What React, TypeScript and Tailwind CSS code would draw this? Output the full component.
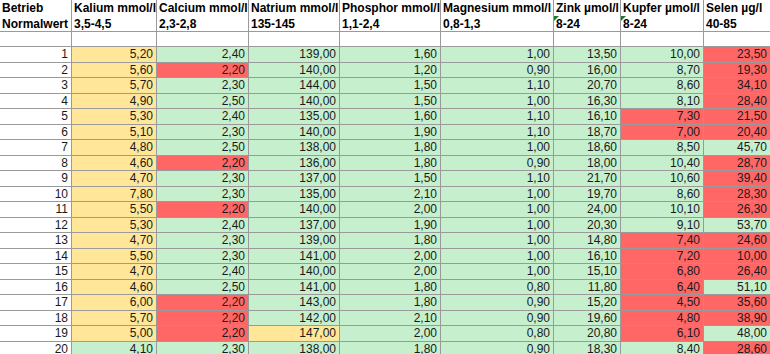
import React from 'react';

type Tone = 'y' | 'g' | 'r' | 'w';

const COLS = ['Betrieb', 'Kalium mmol/l', 'Calcium mmol/l', 'Natrium mmol/l', 'Phosphor mmol/l', 'Magnesium mmol/l', 'Zink µmol/l', 'Kupfer µmol/l', 'Selen µg/l'];
const NORMS = ['Normalwert', '3,5-4,5', '2,3-2,8', '135-145', '1,1-2,4', '0,8-1,3', '8-24', '8-24', '40-85'];

// value + tone per cell, one row per Betrieb
const ROWS: [string, Tone][][] = [
  [['5,20', 'y'], ['2,40', 'g'], ['139,00', 'g'], ['1,60', 'g'], ['1,00', 'g'], ['13,50', 'g'], ['10,00', 'g'], ['23,50', 'r']],
  [['5,60', 'y'], ['2,20', 'r'], ['140,00', 'g'], ['1,20', 'g'], ['0,90', 'g'], ['16,00', 'g'], ['8,70', 'g'], ['19,30', 'r']],
  [['5,70', 'y'], ['2,30', 'g'], ['144,00', 'g'], ['1,50', 'g'], ['1,10', 'g'], ['20,70', 'g'], ['8,60', 'g'], ['34,10', 'r']],
  [['4,90', 'y'], ['2,50', 'g'], ['140,00', 'g'], ['1,50', 'g'], ['1,00', 'g'], ['16,30', 'g'], ['8,10', 'g'], ['28,40', 'r']],
  [['5,30', 'y'], ['2,40', 'g'], ['135,00', 'g'], ['1,60', 'g'], ['1,10', 'g'], ['16,10', 'g'], ['7,30', 'r'], ['21,50', 'r']],
  [['5,10', 'y'], ['2,30', 'g'], ['140,00', 'g'], ['1,90', 'g'], ['1,10', 'g'], ['18,70', 'g'], ['7,00', 'r'], ['20,40', 'r']],
  [['4,80', 'y'], ['2,50', 'g'], ['138,00', 'g'], ['1,80', 'g'], ['1,00', 'g'], ['18,60', 'g'], ['8,50', 'g'], ['45,70', 'g']],
  [['4,60', 'y'], ['2,20', 'r'], ['136,00', 'g'], ['1,80', 'g'], ['0,90', 'g'], ['18,00', 'g'], ['10,40', 'g'], ['28,70', 'r']],
  [['4,70', 'y'], ['2,30', 'g'], ['137,00', 'g'], ['1,50', 'g'], ['1,10', 'g'], ['21,70', 'g'], ['10,60', 'g'], ['39,40', 'r']],
  [['7,80', 'y'], ['2,30', 'g'], ['135,00', 'g'], ['2,10', 'g'], ['1,00', 'g'], ['19,70', 'g'], ['8,60', 'g'], ['28,30', 'r']],
  [['5,50', 'y'], ['2,20', 'r'], ['140,00', 'g'], ['2,00', 'g'], ['1,00', 'g'], ['24,00', 'g'], ['10,10', 'g'], ['26,30', 'r']],
  [['5,30', 'y'], ['2,40', 'g'], ['137,00', 'g'], ['1,90', 'g'], ['1,00', 'g'], ['20,30', 'g'], ['9,10', 'g'], ['53,70', 'g']],
  [['4,70', 'y'], ['2,30', 'g'], ['139,00', 'g'], ['1,80', 'g'], ['1,00', 'g'], ['14,80', 'g'], ['7,40', 'r'], ['24,60', 'r']],
  [['5,50', 'y'], ['2,30', 'g'], ['141,00', 'g'], ['2,00', 'g'], ['1,00', 'g'], ['16,10', 'g'], ['7,20', 'r'], ['10,00', 'r']],
  [['4,70', 'y'], ['2,40', 'g'], ['140,00', 'g'], ['2,00', 'g'], ['1,00', 'g'], ['15,10', 'g'], ['6,80', 'r'], ['26,40', 'r']],
  [['4,60', 'y'], ['2,50', 'g'], ['141,00', 'g'], ['1,80', 'g'], ['0,80', 'g'], ['11,80', 'g'], ['6,40', 'r'], ['51,10', 'g']],
  [['6,00', 'y'], ['2,20', 'r'], ['143,00', 'g'], ['1,80', 'g'], ['0,90', 'g'], ['15,20', 'g'], ['4,50', 'r'], ['35,60', 'r']],
  [['5,70', 'y'], ['2,20', 'r'], ['142,00', 'g'], ['2,10', 'g'], ['0,90', 'g'], ['19,60', 'g'], ['4,80', 'r'], ['38,90', 'r']],
  [['5,00', 'y'], ['2,20', 'r'], ['147,00', 'y'], ['2,00', 'g'], ['0,80', 'g'], ['20,80', 'g'], ['6,10', 'r'], ['48,00', 'g']],
  [['4,10', 'g'], ['2,30', 'g'], ['138,00', 'g'], ['1,80', 'g'], ['0,90', 'g'], ['18,30', 'g'], ['8,40', 'g'], ['28,60', 'r']],
];

const TONE_BG: Record<Tone, string> = {
  y: 'bg-[#ffe699]',
  g: 'bg-[#c6efce]',
  r: 'bg-[#ff6666]',
  w: 'bg-white',
};

const GRID = 'grid grid-cols-[72px_85px_92px_91px_101px_113px_67px_83px_67px]';

const CommentMark = () => (
  <span className="absolute left-0 top-0 h-0 w-0 border-t-[5px] border-r-[5px] border-t-[#1f7a2e] border-r-transparent" />
);

export default function App() {
  return (
    <div className="h-[354px] w-[770px] overflow-hidden bg-white font-['Liberation_Sans',Arial,sans-serif] text-[12px] leading-none text-[#1a1a1a]">
      {/* header: column names */}
      <div className={`${GRID} h-[16px]`}>
        {COLS.map(c => (
          <div key={c} className="flex items-center whitespace-nowrap overflow-hidden border-r border-[#9a9a9a] pl-[2px] font-bold text-black">
            {c}
          </div>
        ))}
      </div>

      {/* header: reference ranges */}
      <div className={`${GRID} h-[16px]`}>
        {NORMS.map((n, i) => (
          <div key={i} className="relative flex items-center whitespace-nowrap overflow-hidden border-r border-b border-[#9a9a9a] pl-[2px] font-bold text-black">
            {(i === 6 || i === 7) && <CommentMark />}
            {n}
          </div>
        ))}
      </div>

      {/* spacer row */}
      <div className={`${GRID} h-[15px]`}>
        {NORMS.map((_, i) => (
          <div key={i} className="border-r border-b border-[#9a9a9a]" />
        ))}
      </div>

      {/* data rows */}
      {ROWS.map((row, r) => (
        <div key={r} className={`${GRID} h-[15.5px]`}>
          <div className="flex items-center justify-end border-r border-b border-[#9a9a9a] pr-[3px]">{r + 1}</div>
          {row.map(([v, t], c) => (
            <div key={c} className={`flex items-center justify-end border-r border-b border-[#9a9a9a] pr-[3px] ${TONE_BG[t]}`}>
              {v}
            </div>
          ))}
        </div>
      ))}
    </div>
  );
}
